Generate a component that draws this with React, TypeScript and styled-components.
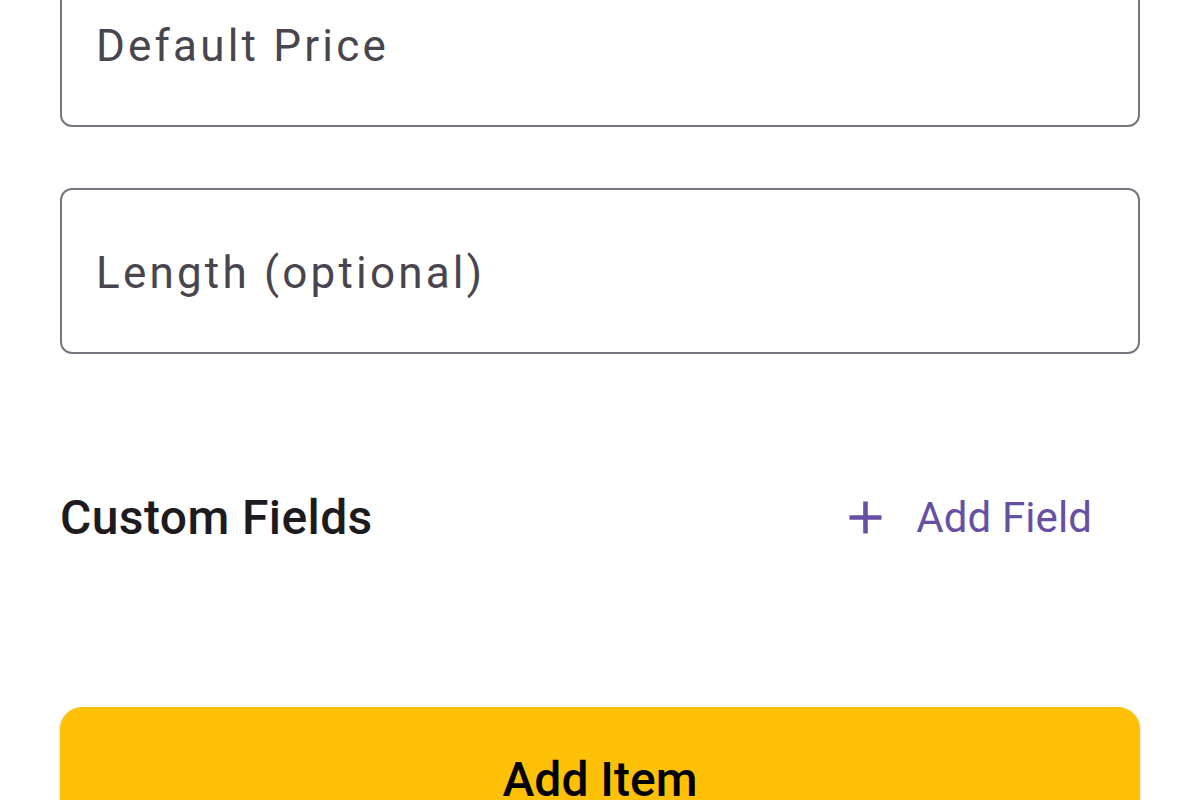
import styled, { createGlobalStyle } from 'styled-components';

const GlobalStyle = createGlobalStyle`
  html, body {
    margin: 0;
    padding: 0;
    background: #ffffff;
    overflow: hidden;
  }
  body {
    font-family: Roboto, "Noto Sans", sans-serif;
  }
`;

const Page = styled.div`
  width: 1200px;
  height: 800px;
  overflow: hidden;
  padding: 0 60px;
  box-sizing: border-box;
`;

// content is scrolled: the first field starts above the viewport
const Form = styled.div`
  display: flex;
  flex-direction: column;
  margin-top: -39px;
`;

const Field = styled.div`
  display: flex;
  align-items: center;
  height: 166px;
  box-sizing: border-box;
  border: 2.5px solid #79747e;
  border-radius: 12px;
  padding: 0 34px;
  margin-bottom: 61px;
`;

const Placeholder = styled.span`
  font-size: 44px;
  letter-spacing: 3.2px;
  color: #49454f;
  padding-top: 3px;
`;

const SectionRow = styled.div`
  display: flex;
  align-items: center;
  justify-content: space-between;
  height: 100px;
  margin-top: 52px;
`;

const SectionTitle = styled.h2`
  margin: 0;
  font-size: 48px;
  font-weight: 500;
  letter-spacing: 0.4px;
  color: #1d1b20;
`;

const TextButton = styled.button`
  display: flex;
  align-items: center;
  gap: 23px;
  background: none;
  border: none;
  padding: 0 48px 0 0;
  font-family: inherit;
  font-size: 42px;
  font-weight: 400;
  letter-spacing: 0.1px;
  color: #6750a4;
  cursor: pointer;

  svg {
    width: 55px;
    height: 55px;
  }
`;

const PrimaryButton = styled.button`
  display: flex;
  justify-content: center;
  align-items: flex-start;
  width: 100%;
  height: 150px;
  margin-top: 140px;
  padding-top: 44px;
  box-sizing: border-box;
  background: #ffc107;
  border: none;
  border-radius: 22px;
  box-shadow: 0 1px 3px rgba(0, 0, 0, 0.2);
  font-family: inherit;
  font-size: 48px;
  font-weight: 500;
  color: #000;
  cursor: pointer;
`;

function PlusIcon() {
  return (
    <svg viewBox="0 0 24 24" fill="currentColor">
      <path d="M19 13h-6v6h-2v-6H5v-2h6V5h2v6h6v2z" />
    </svg>
  );
}

export default function App() {
  return (
    <>
      <GlobalStyle />
      <Page>
        <Form>
          <Field>
            <Placeholder>Default Price</Placeholder>
          </Field>
          <Field>
            <Placeholder>Length (optional)</Placeholder>
          </Field>
          <SectionRow>
            <SectionTitle>Custom Fields</SectionTitle>
            <TextButton>
              <PlusIcon />
              Add Field
            </TextButton>
          </SectionRow>
          <PrimaryButton>Add Item</PrimaryButton>
        </Form>
      </Page>
    </>
  );
}
